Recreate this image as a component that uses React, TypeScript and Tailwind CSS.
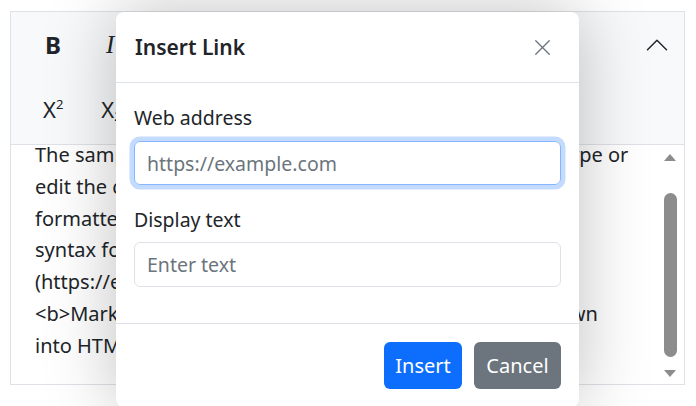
import { X, ChevronUp } from "lucide-react"

const font = { fontFamily: '"Noto Sans", "Open Sans", sans-serif' }

// Lines of the editor's markdown text (mostly hidden behind the dialog)
const lines = [
  "The sample is added to showcase *markdown editing*. Type or",
  "edit the content and apply formatting to view markdown",
  "formatted content. We can add our own custom",
  "syntax for the Markdown formation, [sample link]",
  "(https://ej2.syncfusion.com/home/). The third-party",
  "<b>Marked</b> is used in this sample to convert markdown",
  "into HTML content.",
]

function Toolbar() {
  return (
    <div className="h-[133px] bg-[#f8f9fa] border-b border-[#dee2e6] flex flex-col">
      <div className="h-[65px] flex items-center pl-[29px] pr-[8px]">
        <span className="w-[26px] text-center text-[24px] font-bold text-[#212529]">B</span>
        <span
          className="ml-[40px] text-[25px] italic text-[#212529]"
          style={{ fontFamily: '"Liberation Serif", serif' }}
        >
          I
        </span>
        <span className="ml-auto text-[#212529]">
          <ChevronUp size={38} strokeWidth={0.9} />
        </span>
      </div>
      <div className="h-[65px] flex items-center pl-[32px] text-[#212529] text-[22px]">
        <span>
          X<sup className="text-[13px] top-[-9px]">2</sup>
        </span>
        <span className="ml-[38px]">
          X<sub className="text-[13px]">2</sub>
        </span>
      </div>
    </div>
  )
}

function ScrollBar() {
  return (
    <div className="w-[24px] flex flex-col items-center pr-[4px] pt-[9px] pb-[7px]">
      <div className="w-0 h-0 border-l-[6px] border-r-[6px] border-b-[7px] border-l-transparent border-r-transparent border-b-[#8c8c8c]" />
      <div className="mt-[32px] w-[13px] h-[164px] rounded-full bg-[#8c8c8c]" />
      <div className="mt-auto w-0 h-0 border-l-[6px] border-r-[6px] border-t-[7px] border-l-transparent border-r-transparent border-t-[#8c8c8c]" />
    </div>
  )
}

function Editor() {
  return (
    <div className="w-[675px] h-[374px] border border-[#dee2e6] bg-white flex flex-col">
      <Toolbar />
      <div className="flex-1 flex overflow-hidden">
        <div className="flex-1 overflow-hidden pl-[24px]">
          <div className="-mt-[6px] text-[20px] leading-[31.8px] text-[#212529]">
            {lines.map((l) => (
              <div key={l} className="whitespace-nowrap">
                {l}
              </div>
            ))}
          </div>
        </div>
        <ScrollBar />
      </div>
    </div>
  )
}

function LinkDialog() {
  return (
    <div className="absolute left-[116px] top-[12px] w-[463px] h-[395px] bg-white rounded-[8px] shadow-[0_0_70px_rgba(0,0,0,0.25)] flex flex-col">
      <div className="h-[71px] shrink-0 border-b border-[#dee2e6] flex items-center justify-between pl-[19px] pr-[23px]">
        <h5 className="text-[21px] font-semibold text-[#212529] mt-[2px]">Insert Link</h5>
        <X size={27} strokeWidth={1.2} className="text-[#6c757d]" />
      </div>
      <div className="h-[241px] shrink-0 border-b border-[#dee2e6] px-[18px] pt-[21px]">
        <label className="block h-[27px] leading-[27px] text-[19.5px] text-[#212529]">Web address</label>
        <input
          className="mt-[10px] w-full h-[44px] px-[12px] rounded-[6px] border border-[#86b7fe] text-[19.5px] text-[#212529] placeholder:text-[#6c757d] outline-none shadow-[0_0_0_4.5px_#c2dbfe]"
          placeholder="https://example.com"
          style={font}
        />
        <label className="block mt-[21px] h-[27px] leading-[27px] text-[19.5px] text-[#212529]">Display text</label>
        <input
          className="mt-[9px] w-full h-[45px] px-[12px] rounded-[6px] border border-[#dee2e6] text-[19.5px] text-[#212529] placeholder:text-[#6c757d] outline-none"
          placeholder="Enter text"
          style={font}
        />
      </div>
      <div className="flex justify-end gap-[12px] px-[18px] pt-[18px]">
        <button className="h-[47px] w-[78px] rounded-[6px] bg-[#0d6efd] text-white text-[20px]" style={font}>
          Insert
        </button>
        <button className="h-[47px] w-[87px] rounded-[6px] bg-[#6c757d] text-white text-[20px]" style={font}>
          Cancel
        </button>
      </div>
    </div>
  )
}

export default function App() {
  return (
    <div className="relative w-[696px] h-[406px] overflow-hidden bg-white pt-[11px] pl-[10px]" style={font}>
      <Editor />
      <LinkDialog />
    </div>
  )
}
